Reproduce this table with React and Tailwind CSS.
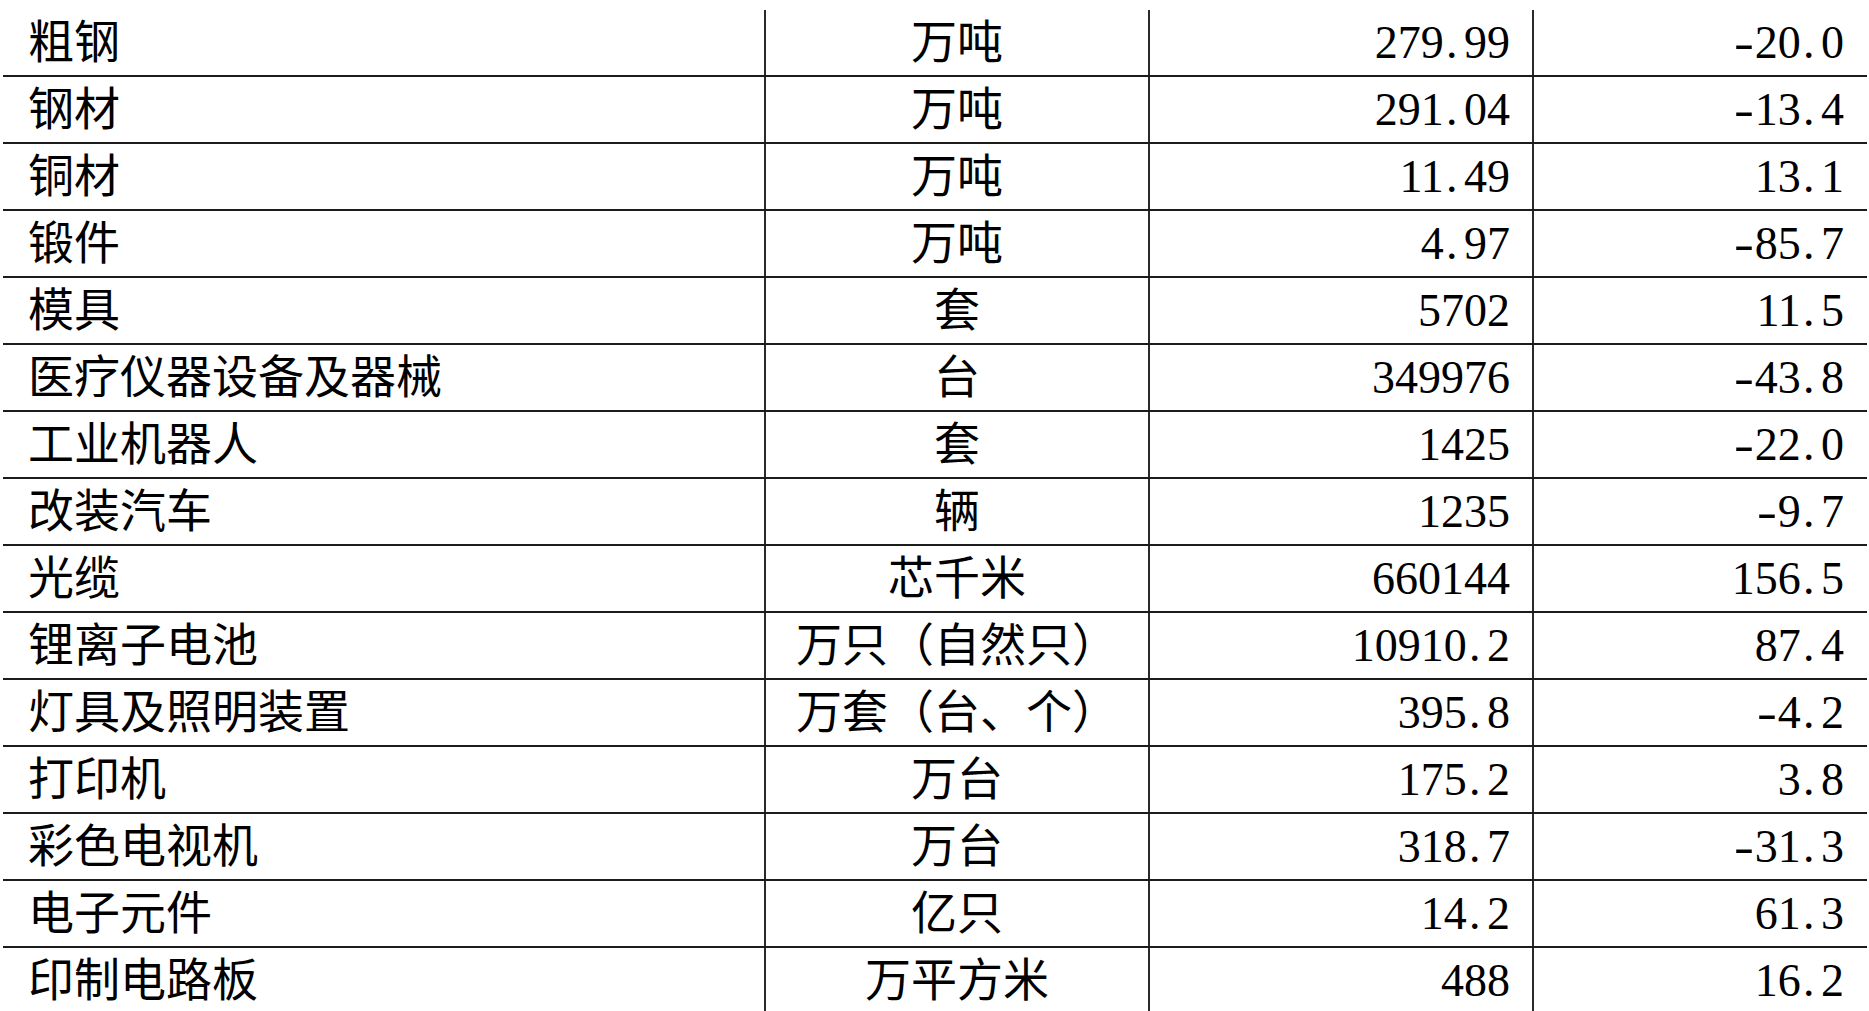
import React from "react";

const rows = [
  ["粗钢", "万吨", "279.99", "-20.0"],
  ["钢材", "万吨", "291.04", "-13.4"],
  ["铜材", "万吨", "11.49", "13.1"],
  ["锻件", "万吨", "4.97", "-85.7"],
  ["模具", "套", "5702", "11.5"],
  ["医疗仪器设备及器械", "台", "349976", "-43.8"],
  ["工业机器人", "套", "1425", "-22.0"],
  ["改装汽车", "辆", "1235", "-9.7"],
  ["光缆", "芯千米", "660144", "156.5"],
  ["锂离子电池", "万只（自然只）", "10910.2", "87.4"],
  ["灯具及照明装置", "万套（台、个）", "395.8", "-4.2"],
  ["打印机", "万台", "175.2", "3.8"],
  ["彩色电视机", "万台", "318.7", "-31.3"],
  ["电子元件", "亿只", "14.2", "61.3"],
  ["印制电路板", "万平方米", "488", "16.2"],
];

// the source font gives "." and "-" wider cells, so pad them out
const Num = ({ value }) => {
  const neg = value.startsWith("-");
  const [a, b] = (neg ? value.slice(1) : value).split(".");
  return (
    <span>
      {neg && (
        <span className="inline-block scale-x-[1.3] origin-left pr-[0.12em]">-</span>
      )}
      {a}
      {b !== undefined && (
        <>
          <span className="pl-[0.05em] pr-[0.14em]">.</span>
          {b}
        </>
      )}
    </span>
  );
};

const App = () => {
  return (
    <div
      className="w-[1869px] h-[1011px] overflow-hidden bg-white text-black pt-[10px] pl-[3px] pr-[2px]"
      style={{ fontFamily: '"Liberation Serif", "Noto Sans CJK SC", serif' }}
    >
      {rows.map(([name, unit, amount, growth]) => (
        <div
          key={name}
          className="grid grid-cols-[761px_384px_384px_1fr] h-[67px] border-b-2 border-[#1c1c1c] text-[46px] leading-none"
        >
          <div className="flex items-center pl-[25px]">{name}</div>
          <div className="flex items-center justify-center border-l-2 border-[#2a2a2a]">
            {unit}
          </div>
          <div className="flex items-center justify-end pr-[22px] border-l-2 border-[#2a2a2a]">
            <Num value={amount} />
          </div>
          <div className="flex items-center justify-end pr-[23px] border-l-2 border-[#2a2a2a]">
            <Num value={growth} />
          </div>
        </div>
      ))}
    </div>
  );
};

export default App;
